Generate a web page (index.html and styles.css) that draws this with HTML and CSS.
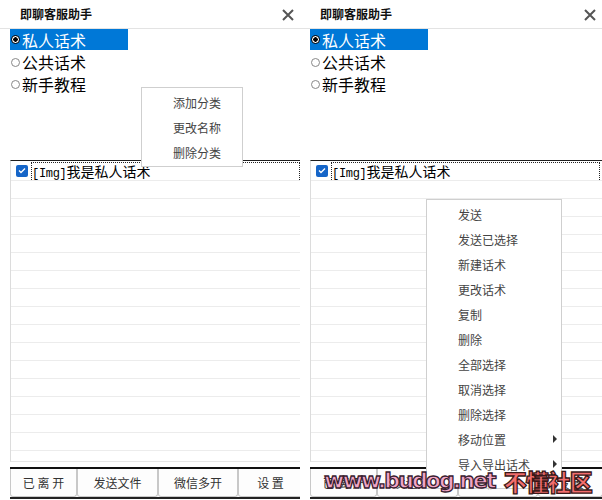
FILE: index.html
```html
<!DOCTYPE html>
<html lang="zh-CN">
<head>
    <meta charset="UTF-8">
    <title>即聊客服助手</title>
    <link rel="stylesheet" href="styles.css">
</head>
<body>
    <div class="screen">
        <!-- left window: category menu open -->
        <div class="panel">
            <div class="header">
                <span class="title">即聊客服助手</span>
                <span class="close"><svg width="12" height="12" viewBox="0 0 12 12"><path d="M1 1L11 11M11 1L1 11" stroke="#555" stroke-width="2"/></svg></span>
            </div>
            <div class="radios">
                <div class="radio selected"><span class="dot"></span>私人话术</div>
                <div class="radio"><span class="dot"></span>公共话术</div>
                <div class="radio"><span class="dot"></span>新手教程</div>
            </div>
            <div class="list">
                <div class="row first"><span class="check"><svg width="8" height="7" viewBox="0 0 8 7"><path d="M1 3.5L3 5.5L7 1.5" stroke="#fff" stroke-width="1.3" fill="none"/></svg></span><span class="focus"><span class="tag">[Img]</span>我是私人话术</span></div>
                <div class="row"></div><div class="row"></div><div class="row"></div><div class="row"></div>
                <div class="row"></div><div class="row"></div><div class="row"></div><div class="row"></div>
                <div class="row"></div><div class="row"></div><div class="row"></div><div class="row"></div>
                <div class="row"></div><div class="row"></div><div class="row"></div>
            </div>
            <div class="buttons">
                <button class="btn w1">已 离 开</button>
                <button class="btn w2">发送文件</button>
                <button class="btn w3">微信多开</button>
                <button class="btn w4">设 置</button>
            </div>
            <div class="menu menu-cat">
                <div class="item">添加分类</div>
                <div class="item">更改名称</div>
                <div class="item">删除分类</div>
            </div>
        </div>

        <!-- right window: item menu open -->
        <div class="panel wide">
            <div class="header">
                <span class="title">即聊客服助手</span>
                <span class="close"><svg width="12" height="12" viewBox="0 0 12 12"><path d="M1 1L11 11M11 1L1 11" stroke="#555" stroke-width="2"/></svg></span>
            </div>
            <div class="radios">
                <div class="radio selected"><span class="dot"></span>私人话术</div>
                <div class="radio"><span class="dot"></span>公共话术</div>
                <div class="radio"><span class="dot"></span>新手教程</div>
            </div>
            <div class="list">
                <div class="row first"><span class="check"><svg width="8" height="7" viewBox="0 0 8 7"><path d="M1 3.5L3 5.5L7 1.5" stroke="#fff" stroke-width="1.3" fill="none"/></svg></span><span class="focus"><span class="tag">[Img]</span>我是私人话术</span></div>
                <div class="row"></div><div class="row"></div><div class="row"></div><div class="row"></div>
                <div class="row"></div><div class="row"></div><div class="row"></div><div class="row"></div>
                <div class="row"></div><div class="row"></div><div class="row"></div><div class="row"></div>
                <div class="row"></div><div class="row"></div><div class="row"></div>
            </div>
            <div class="buttons">
                <button class="btn w1">已 离 开</button>
                <button class="btn w2">发送文件</button>
                <button class="btn w3">微信多开</button>
                <button class="btn w4">设 置</button>
            </div>
            <div class="menu menu-item">
                <div class="item">发送</div>
                <div class="item">发送已选择</div>
                <div class="item">新建话术</div>
                <div class="item">更改话术</div>
                <div class="item">复制</div>
                <div class="item">删除</div>
                <div class="item">全部选择</div>
                <div class="item">取消选择</div>
                <div class="item">删除选择</div>
                <div class="item sub">移动位置</div>
                <div class="item sub">导入导出话术</div>
            </div>
        </div>

        <div class="watermark"><span class="site">www.budog.net</span><span class="name">不懂社区</span></div>
    </div>
</body>
</html>
```

FILE: styles.css
```css
body {
    margin: 0;
    background: #fff;
    font-family: "Noto Sans CJK SC", "Liberation Sans", sans-serif;
}

.screen {
    position: relative;
    display: flex;
    width: 602px;
    height: 500px;
    overflow: hidden;
}

.panel {
    position: relative;
    width: 300px;
    height: 500px;
    background: #fff;
}

.panel.wide {
    width: 302px;
}

.header {
    display: flex;
    align-items: center;
    justify-content: space-between;
    height: 28px;
    padding: 0 6px 0 20px;
    border-bottom: 1px solid #e3e3e3;
}

.title {
    font-size: 12px;
    font-weight: bold;
    color: #111;
    line-height: 28px;
}

.close {
    display: flex;
    width: 12px;
    height: 12px;
    margin-top: 2px;
}

.radios {
    padding-left: 10px;
    height: 131px;
}

.radio {
    display: flex;
    align-items: center;
    height: 22px;
    font-size: 16px;
    color: #000;
    line-height: 22px;
}

.radio.selected {
    width: 118px;
    height: 21px;
    background: #0078d7;
    color: #fff;
    margin-bottom: 1px;
}

.dot {
    box-sizing: border-box;
    width: 9px;
    height: 9px;
    margin: 0 2px 0 1px;
    border: 1px solid #888;
    border-radius: 50%;
    background: #fff;
}

.selected .dot {
    border-color: #000;
    background: radial-gradient(circle, #000 0 2px, #fff 2.5px);
}

.list {
    box-sizing: border-box;
    width: 293px;
    height: 302px;
    margin-left: 10px;
    border-top: 1px solid #1e1e1e;
    border-left: 1px solid #dcdcdc;
    border-right: 1px solid #dcdcdc;
    border-bottom: 1px solid #e6e6e6;
    overflow: hidden;
}

.row {
    height: 17px;
    border-bottom: 1px solid #ececec;
}

.row.first {
    display: flex;
    align-items: center;
    height: 19px;
    padding-left: 5px;
}

.check {
    display: flex;
    align-items: center;
    justify-content: center;
    width: 12px;
    height: 12px;
    border-radius: 2px;
    background: #1565c8;
    flex-shrink: 0;
}

.focus {
    flex: 1;
    margin: 0 2px 0 3px;
    height: 17px;
    border: 1px dotted #222;
    border-bottom: none;
    font-size: 14px;
    line-height: 17px;
    color: #000;
    white-space: nowrap;
}

.tag {
    font-family: "Liberation Mono", monospace;
    font-size: 12px;
    letter-spacing: -0.3px;
}

.buttons {
    display: flex;
    width: 293px;
    margin: 5px 0 0 10px;
    border-top: 2px solid #111;
    border-bottom: 2px solid #222;
}

.btn {
    height: 28px;
    padding: 0;
    border: 1px solid #c8c8c8;
    border-top: none;
    border-radius: 0 0 3px 3px;
    background: #fdfdfd;
    font-family: "Noto Sans CJK SC", sans-serif;
    font-size: 12px;
    color: #333;
}

.w1 { width: 67px; }
.w2 { width: 81px; }
.w3 { width: 80px; }
.w4 { width: 65px; }

.menu {
    position: absolute;
    box-sizing: border-box;
    background: #fff;
    border: 1px solid #cfcfcf;
    padding-top: 2px;
}

.menu .item {
    position: relative;
    height: 25px;
    font-size: 12px;
    line-height: 25px;
    color: #444;
}

.menu-cat {
    left: 141px;
    top: 87px;
    width: 102px;
    height: 80px;
}

.menu-cat .item {
    padding-left: 31px;
}

.menu-item {
    left: 126px;
    top: 199px;
    width: 136px;
    height: 290px;
}

.menu-item .item {
    padding-left: 31px;
}

.item.sub::after {
    content: "";
    position: absolute;
    right: 4px;
    top: 8px;
    border-left: 4px solid #333;
    border-top: 4px solid transparent;
    border-bottom: 4px solid transparent;
}

.watermark {
    position: absolute;
    left: 324px;
    top: 467px;
    display: flex;
    align-items: center;
    font-family: "DejaVu Sans", sans-serif;
    font-weight: bold;
    line-height: 28px;
}

.site {
    font-size: 22px;
    letter-spacing: -1.9px;
    color: #f2a6c6;
    -webkit-text-stroke: 1.3px #3a2030;
}

.name {
    margin-left: 9px;
    font-family: "Noto Sans CJK SC", sans-serif;
    font-weight: 900;
    font-size: 23px;
    letter-spacing: -1px;
    color: #f36d6d;
    -webkit-text-stroke: 1.3px #3a1818;
}
```
